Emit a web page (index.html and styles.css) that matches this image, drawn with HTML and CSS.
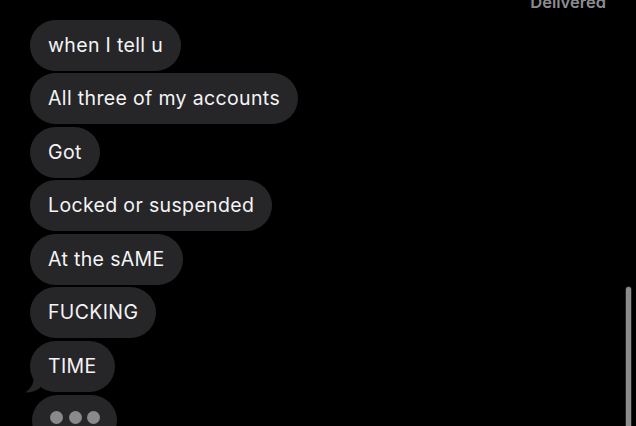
FILE: index.html
```html
<!DOCTYPE html>
<html>
<head>
<meta charset="utf-8">
<link rel="stylesheet" href="styles.css">
</head>
<body>
<div class="screen">
  <div class="status">Delivered</div>
  <div class="thread">
    <div class="bubble">when I tell u</div>
    <div class="bubble">All three of my accounts</div>
    <div class="bubble">Got</div>
    <div class="bubble">Locked or suspended</div>
    <div class="bubble">At the sAME</div>
    <div class="bubble">FUCKING</div>
    <div class="bubble tailed">TIME
      <svg class="tail" width="20" height="18" viewBox="0 0 20 18"><path d="M12 0 C12 8 10 13 3 17.5 C9 17.5 14 16 18 13 L20 0 Z" fill="#262628"/></svg>
    </div>
    <div class="bubble typing"><span class="dot"></span><span class="dot"></span><span class="dot"></span></div>
  </div>
  <div class="scrollbar"></div>
</div>
</body>
</html>
```
FILE: styles.css
```css
html, body {
  margin: 0;
  padding: 0;
  background: #000;
}
.screen {
  position: relative;
  width: 636px;
  height: 426px;
  overflow: hidden;
  background: #000;
  font-family: Inter, "Noto Sans", sans-serif;
}
.status {
  display: flex;
  justify-content: flex-end;
  padding-right: 30px;
  margin-top: -7px;
  height: 18px;
  line-height: 18px;
  font-size: 16.5px;
  font-weight: 600;
  color: #8c8c90;
}
.thread {
  display: flex;
  flex-direction: column;
  align-items: flex-start;
  gap: 2.6px;
  padding-left: 30px;
  margin-top: 8.5px;
}
.bubble {
  position: relative;
  box-sizing: border-box;
  height: 51px;
  padding: 0 18px;
  border-radius: 25.5px;
  background: #262628;
  color: #f4f4f6;
  font-size: 19.5px;
  line-height: 51px;
  letter-spacing: 0.35px;
  white-space: nowrap;
}
.tail {
  position: absolute;
  left: -8px;
  bottom: -0.5px;
}
.typing {
  margin-left: 2px;
  margin-top: 0;
  width: 85px;
  display: flex;
  align-items: flex-start;
  gap: 5.5px;
  padding: 16px 0 0 18px;
}
.dot {
  width: 13px;
  height: 13px;
  border-radius: 50%;
  background: #8a8a8e;
}
.scrollbar {
  position: absolute;
  left: 626px;
  top: 287px;
  width: 5px;
  height: 150px;
  border-radius: 2.5px;
  background: #8b8b8b;
  box-shadow: 0 0 0 0.5px #444;
}
```
